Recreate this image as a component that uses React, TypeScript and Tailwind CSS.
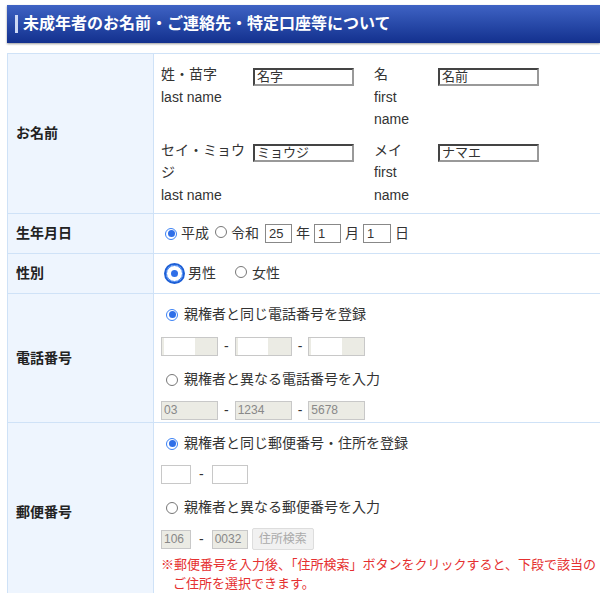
import React from "react";

const Radio = ({ checked, big }: { checked?: boolean; big?: boolean }) => (
  <span
    className={`inline-flex items-center justify-center rounded-full border ${
      checked ? "border-[#3b82f6]" : "border-[#777]"
    } ${big ? "w-[17px] h-[17px] outline-2 outline-[#1d5fd6] outline-offset-0" : "w-[12px] h-[12px]"} bg-white`}
  >
    {checked && <span className="w-[7px] h-[7px] rounded-full bg-[#2f6fe8]" />}
  </span>
);

const Field = ({ value, w }: { value: string; w: string }) => (
  <span
    className={`inline-block h-[18px] ${w} border-2 border-t-[#444] border-l-[#444] border-b-[#999] border-r-[#999] bg-white text-[13px] leading-[14px] px-[2px]`}
  >
    {value}
  </span>
);

const Grey = ({ value, w }: { value?: string; w: string }) => (
  <span
    className={`inline-block h-[19px] ${w} border border-[#c8c8c8] bg-[#ebebe4] text-[12px] leading-[17px] px-[2px] text-[#888]`}
  >
    {value ? value : <span className="inline-block w-[60%] h-full bg-white" />}
  </span>
);

const Label = ({ children, h }: { children: React.ReactNode; h: string }) => (
  <div className={`${h} flex items-center pl-[8px] bg-[#eef5fe] border-r border-b border-[#cfe2f7] font-bold text-[14px] text-[#222]`}>
    {children}
  </div>
);

export default function App() {
  return (
    <div className="w-[600px] h-[593px] overflow-hidden bg-white text-[14px] text-[#333]" style={{ fontFamily: '"Liberation Sans", "Noto Sans CJK JP", sans-serif' }}>
      <div className="ml-[7px] mt-[5px] h-[38px] flex items-center bg-gradient-to-b from-[#3f63c4] to-[#13308e] shadow-[0_1px_2px_#999]">
        <span className="ml-[8px] w-[3px] h-[18px] bg-[#cdd8f4]" />
        <span className="ml-[5px] text-white font-bold text-[16px]">未成年者のお名前・ご連絡先・特定口座等について</span>
      </div>
      <div className="ml-[7px] mt-[10px] grid grid-cols-[146px_1fr] border-t border-l border-[#cfe2f7]">
        <Label h="h-[160px]">お名前</Label>
        <div className="h-[160px] border-b border-[#cfe2f7] pl-[7px] pt-[9px] leading-[22.5px]">
          {[["姓・苗字", "名字", "last name", "名", "名前"], ["セイ・ミョウジ", "ミョウジ", "last name", "メイ", "ナマエ"]].map((g, i) => (
            <div key={i} className={`flex ${i ? "mt-[8px]" : ""}`}>
              <div className="w-[92px]">
                <div className="break-all">{g[0]}</div>
                <div>{g[2]}</div>
              </div>
              <div className="w-[121px] pt-[2px]"><Field value={g[1]} w="w-[101px]" /></div>
              <div className="w-[64px]">
                <div>{g[3]}</div>
                <div>first</div>
                <div>name</div>
              </div>
              <div className="pt-[2px]"><Field value={g[4]} w="w-[101px]" /></div>
            </div>
          ))}
        </div>
        <Label h="h-[40px]">生年月日</Label>
        <div className="h-[40px] border-b border-[#cfe2f7] pl-[11px] flex items-center gap-[4px]">
          <Radio checked /><span>平成</span>
          <span className="ml-[2px]"><Radio /></span><span>令和</span>
          <span className="inline-block w-[27px] h-[19px] border border-[#888] px-[3px] text-[13px] leading-[17px] ml-[2px]">25</span>
          <span>年</span>
          <span className="inline-block w-[27px] h-[19px] border border-[#888] px-[3px] text-[13px] leading-[17px]">1</span>
          <span>月</span>
          <span className="inline-block w-[28px] h-[19px] border border-[#888] px-[3px] text-[13px] leading-[17px]">1</span>
          <span>日</span>
        </div>
        <Label h="h-[40px]">性別</Label>
        <div className="h-[40px] border-b border-[#cfe2f7] pl-[12px] flex items-center gap-[5px]">
          <Radio checked big /><span>男性</span>
          <span className="ml-[14px]"><Radio /></span><span>女性</span>
        </div>
        <Label h="h-[129px]">電話番号</Label>
        <div className="h-[129px] border-b border-[#cfe2f7] pl-[7px] pt-[10px]">
          <div className="flex items-center gap-[6px] pl-[5px]"><Radio checked /><span>親権者と同じ電話番号を登録</span></div>
          <div className="flex items-center gap-[6px] mt-[11px]">
            <Grey w="w-[57px]" />-<Grey w="w-[57px]" />-<Grey w="w-[57px]" />
          </div>
          <div className="flex items-center gap-[6px] pl-[5px] mt-[12px]"><Radio /><span>親権者と異なる電話番号を入力</span></div>
          <div className="flex items-center gap-[6px] mt-[10px]">
            <Grey value="03" w="w-[57px]" />-<Grey value="1234" w="w-[57px]" />-<Grey value="5678" w="w-[57px]" />
          </div>
        </div>
        <Label h="h-[180px]">郵便番号</Label>
        <div className="h-[180px] border-b border-[#cfe2f7] pl-[7px] pt-[10px]">
          <div className="flex items-center gap-[6px] pl-[5px]"><Radio checked /><span>親権者と同じ郵便番号・住所を登録</span></div>
          <div className="flex items-center gap-[8px] mt-[10px]">
            <span className="inline-block w-[30px] h-[19px] border border-[#c8c8c8] bg-white" />-
            <span className="inline-block w-[36px] h-[19px] border border-[#c8c8c8] bg-white" />
          </div>
          <div className="flex items-center gap-[6px] pl-[5px] mt-[12px]"><Radio /><span>親権者と異なる郵便番号を入力</span></div>
          <div className="flex items-center gap-[8px] mt-[10px]">
            <Grey value="106" w="w-[30px]" />-<Grey value="0032" w="w-[36px]" />
            <span className="-ml-[4px] inline-block h-[22px] px-[6px] border border-[#ddd] rounded-[2px] bg-[#f1f1f1] text-[#aaa] text-[12px] leading-[20px]">住所検索</span>
          </div>
          <div className="text-[#e53030] text-[13px] leading-[19px] mt-[5px]">
            <div>※郵便番号を入力後、「住所検索」ボタンをクリックすると、下段で該当の</div>
            <div className="pl-[12px]">ご住所を選択できます。</div>
          </div>
        </div>
      </div>
    </div>
  );
}
